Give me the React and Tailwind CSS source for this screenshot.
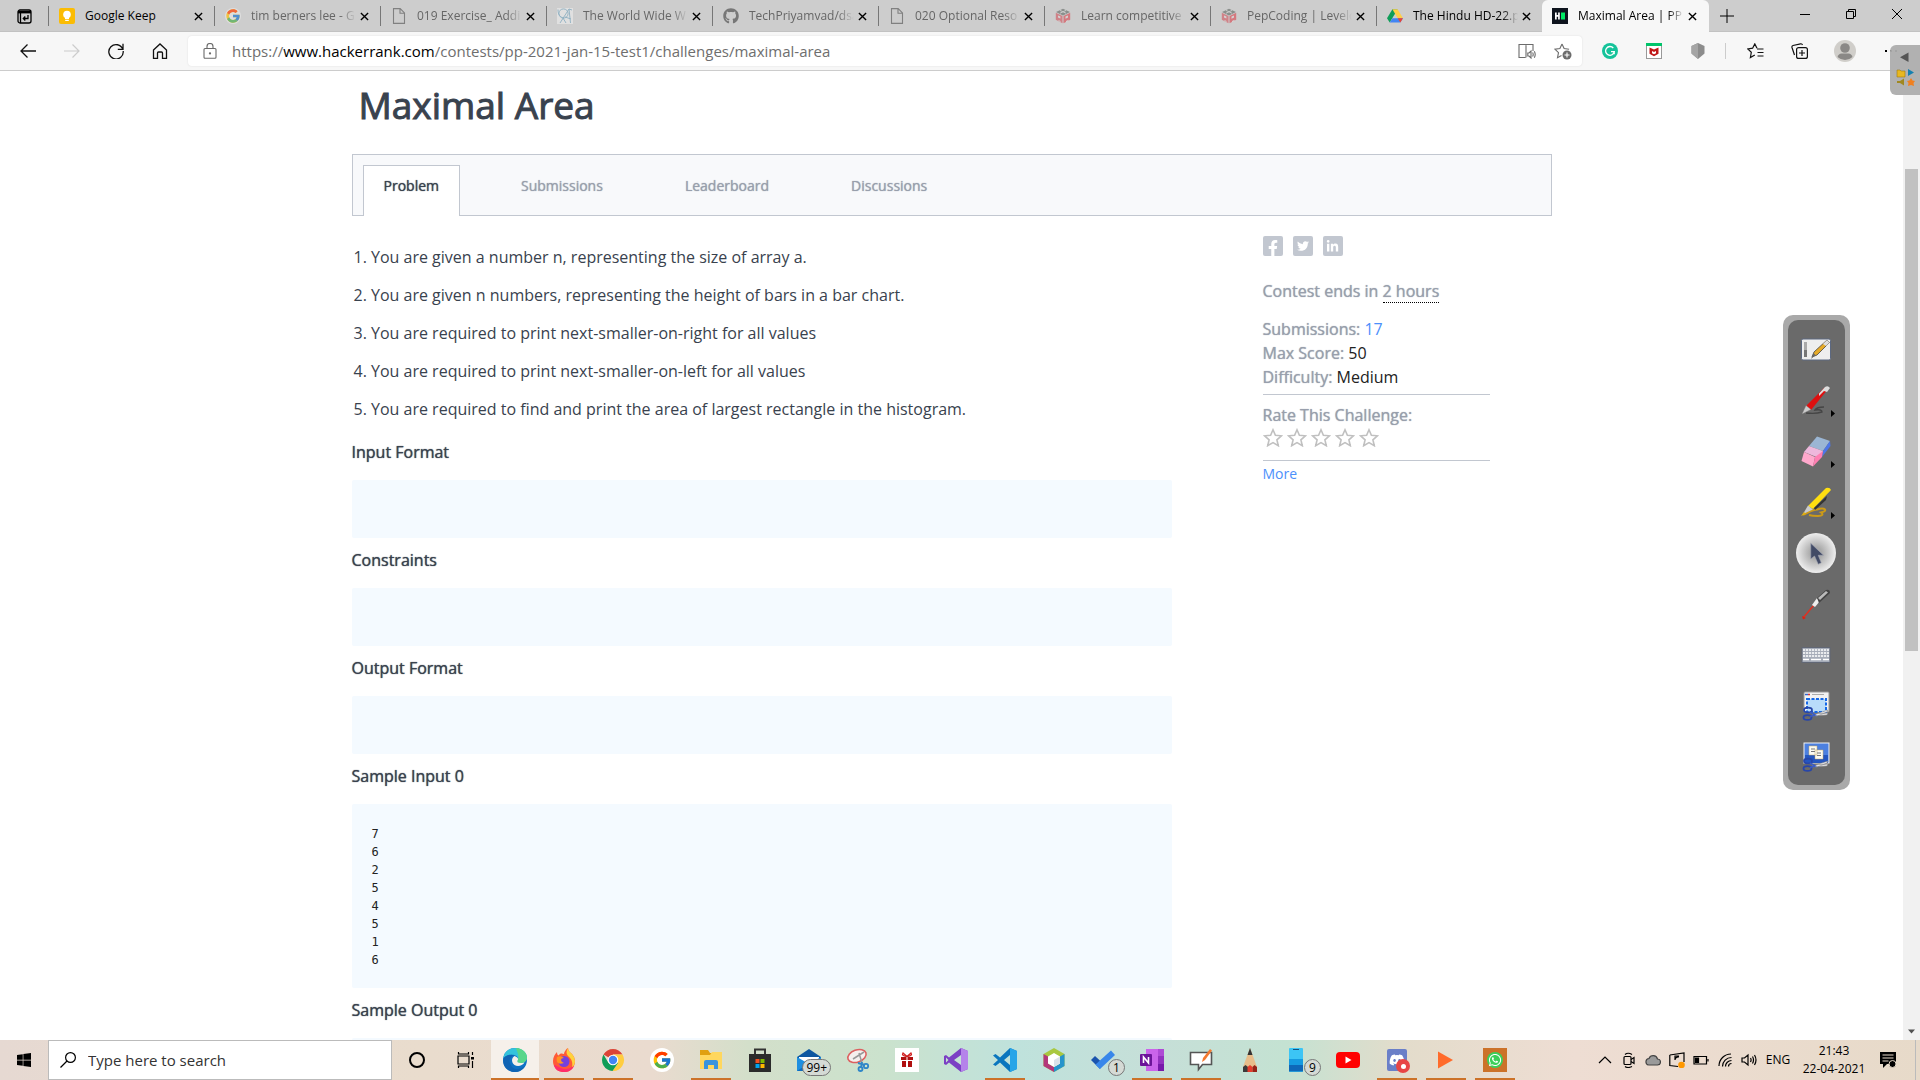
import React from "react";
import { FcGoogle } from "react-icons/fc";
import { FaGithub, FaFacebookF, FaTwitter, FaLinkedinIn, FaWindows, FaWhatsapp, FaDiscord } from "react-icons/fa";

/* ---------- browser tab icons ---------- */
const KeepIcon = () => (
  <svg viewBox="0 0 16 16" className="size-4">
    <rect width="16" height="16" rx="2" fill="#fbbc04" />
    <circle cx="8" cy="6.6" r="3.8" fill="#fff" />
    <path d="M6 9h4v2H6zM6.2 11.8h3.6V13H6.2z" fill="#fff" />
  </svg>
);
const FileIcon = () => (
  <svg viewBox="0 0 16 16" className="size-4" fill="none" stroke="#808080" strokeWidth="1.1">
    <path d="M2.5.6h6.7l4.3 4.3v10.5h-11zM9 .8v4.4h4.3" />
  </svg>
);
const W3Icon = () => (
  <svg viewBox="0 0 16 16" className="size-4" fill="none" stroke="#8fb0c2" strokeWidth=".9">
    <rect width="16" height="16" fill="#e0e0e0" stroke="none" />
    <circle cx="6.500" cy="5.500" r="4.600" />
    <path d="M1 1.500c0 5 2 8 6 8.500M3 15 12 1l1.500 14M8 9l6 2M12 1l3 1M6 10l3 5" />
  </svg>
);
const PepIcon = () => (
  <svg viewBox="0 0 16 16" className="size-4">
    <path d="M8 .8 15 4 8 7.4 1 4z" fill="#8a8f8c" />
    <path d="m.8 4.8 6.7 3.3v7.1L.8 11.8z" fill="#cf8288" />
    <path d="m15.2 4.8-6.7 3.3v7.1l6.7-3.4z" fill="#d4797f" />
    <path d="m3 7.4 2.4 1.2v2L3 9.6zM10.500 8.600 13 7.400v2.200l-2.500 1.200zM3.500 12l2 1v1l-2-1M11 13l2.500-1.200v1.400L11 14.400" fill="#d3d3d3" />
    <path d="M5 2.400 11 5.200M11 2.400 5 5.200" stroke="#c9c9c9" />
  </svg>
);
const DriveIcon = () => (
  <svg viewBox="0 0 16 16" className="size-4">
    <path d="M5.400 1.200h5.200L8 5.700 2.700 14.600 0 10.200z" fill="#0f9d58" />
    <path d="M5.400 1.200h5.200L16 10.200h-5.300z" fill="#ffcf48" />
    <path d="M5.400 10.200H16l-2.700 4.400H2.700z" fill="#4285f4" />
    <path d="M10.700 10.200H16l-2.700 4.400z" fill="#ea4335" />
  </svg>
);
const HackerIcon = () => (
  <svg viewBox="0 0 16 16" className="size-4">
    <rect width="16" height="16" fill="#0e141e" />
    <path d="M3 4.500h1.700v2.600h1.400V4.500h1.700v7H6.100V8.800H4.700v2.700H3z" fill="#fff" />
    <rect x="9" y="4.500" width="4" height="7" fill="#00ea64" />
  </svg>
);

const TABS = [
  { title: "Google Keep", icon: <KeepIcon />, tone: "text-black" },
  { title: "tim berners lee - G", icon: <FcGoogle className="size-4 rounded-full bg-[#e6e6e6] opacity-70" />, tone: "text-[#666]", fade: true },
  { title: "019 Exercise_ Addi", icon: <FileIcon />, tone: "text-[#666]", fade: true },
  { title: "The World Wide W", icon: <W3Icon />, tone: "text-[#666]", fade: true },
  { title: "TechPriyamvad/dsa", icon: <FaGithub className="size-4 text-[#777]" />, tone: "text-[#666]", fade: true },
  { title: "020 Optional Reso", icon: <FileIcon />, tone: "text-[#666]", fade: true },
  { title: "Learn competitive", icon: <PepIcon />, tone: "text-[#666]", fade: true },
  { title: "PepCoding | Levelc", icon: <PepIcon />, tone: "text-[#666]", fade: true },
  { title: "The Hindu HD-22.p", icon: <DriveIcon />, tone: "text-black", fade: true },
  { title: "Maximal Area | PP", icon: <HackerIcon />, tone: "text-black", active: true, fade: true },
];

function CloseX() {
  return (
    <svg viewBox="0 0 10 10" className="size-[9px]" stroke="#000" strokeWidth="1.500">
      <path d="m1 1 8 8M9 1 1 9" />
    </svg>
  );
}

function TabStrip() {
  return (
    <div className="flex h-8 shrink-0 items-stretch bg-[#cdcdcd] shadow-[inset_0_-1px_0_#c2c2c2]">
      <button aria-label="Tab actions" className="flex w-12 shrink-0 items-center pl-[17px]">
        <svg viewBox="0 0 15 15" className="size-[15px]" fill="none" stroke="#000" strokeWidth="1.300">
          <rect x="1" y="1" width="13" height="13" rx="2" />
          <path d="M1 3.200h13" strokeWidth="2.400" />
          <path d="M3.500 3v11" />
          <path d="M11 6v3.500H6.500M8.300 7.500l-2 2 2 2" />
        </svg>
      </button>
      {TABS.map((t, i) => (
        <div
          key={i}
          className={
            t.active
              ? "flex w-[167px] shrink items-center rounded-t-md bg-[#f7f7f7] pr-3 pl-[10px]"
              : "flex w-[166px] shrink items-center pr-[11px]"
          }
        >
          {!t.active && <span className="mr-[10px] h-5 w-px shrink-0 bg-[#777]" />}
          <span className="shrink-0">{t.icon}</span>
          <a
            href="#tab"
            className={`ml-[10px] min-w-0 flex-1 text-[12px] leading-5 whitespace-nowrap ${t.tone} ${t.fade ? "[mask-image:linear-gradient(to_right,black_85%,transparent)]" : ""}`}
          >
            {t.title}
          </a>
          <button aria-label={`Close ${t.title}`} className="ml-1 shrink-0"><CloseX /></button>
        </div>
      ))}
      <button aria-label="New tab" className="flex w-9 shrink-0 items-center justify-center">
        <svg viewBox="0 0 14 14" className="size-[14px]" stroke="#000" strokeWidth="1"><path d="M7 0v14M0 7h14" /></svg>
      </button>
      <div className="ml-auto flex shrink-0 pb-1">
        <button aria-label="Minimize" className="flex w-[46px] items-center justify-center">
          <svg viewBox="0 0 10 10" className="size-[10px]" stroke="#000"><path d="M0 5.500h10" /></svg>
        </button>
        <button aria-label="Restore" className="flex w-[46px] items-center justify-center">
          <svg viewBox="0 0 10 10" className="size-[10px]" fill="none" stroke="#000"><path d="M.5 2.500h7v7h-7zM2.500 2.500v-2h7v7h-2" /></svg>
        </button>
        <button aria-label="Close window" className="flex w-[46px] items-center justify-center">
          <svg viewBox="0 0 10 10" className="size-[10px]" stroke="#000"><path d="m0 0 10 10M10 0 0 10" /></svg>
        </button>
      </div>
    </div>
  );
}

function NavButton({ label, children }) {
  return <button aria-label={label} className="flex h-8 w-11 shrink-0 items-center justify-center">{children}</button>;
}

function Toolbar() {
  return (
    <div className="flex h-[39px] shrink-0 items-center border-b border-[#ccc] bg-[#f7f7f7] pl-[6px]">
      <NavButton label="Back">
        <svg viewBox="0 0 16 16" className="size-4" fill="none" stroke="#111" strokeWidth="1.300"><path d="M16 8H1M7.500 1.500 1 8l6.500 6.500" /></svg>
      </NavButton>
      <NavButton label="Forward">
        <svg viewBox="0 0 16 16" className="size-4" fill="none" stroke="#ccc" strokeWidth="1.200"><path d="M0 8h15M8.500 1.500 15 8l-6.500 6.500" /></svg>
      </NavButton>
      <NavButton label="Reload">
        <svg viewBox="0 0 16 16" className="size-4" fill="none" stroke="#111" strokeWidth="1.300"><path d="M14.800 6.300A7.200 7.200 0 1 0 15.200 8M15 .8v5.500H9.800" /></svg>
      </NavButton>
      <NavButton label="Home">
        <svg viewBox="0 0 16 16" className="size-4" fill="none" stroke="#111" strokeWidth="1.300"><path d="M1.500 7 8 1l6.500 6v8.300h-4V10q0-1-1-1h-3q-1 0-1 1v5.300h-4z" /></svg>
      </NavButton>
      <div className="ml-[6px] flex h-[30px] min-w-0 flex-1 items-center rounded-sm bg-white pr-[10px] pl-[15px] shadow-[0_0_2px_#ddd]">
        <svg viewBox="0 0 14 16" className="h-4 w-[14px] shrink-0" fill="none" stroke="#6b6b6b" strokeWidth="1.100">
          <rect x="1" y="5.500" width="12" height="9.800" rx="1" /><path d="M4 5.500V3.500a3 3 0 0 1 6 0v2" /><circle cx="7" cy="10.400" r=".6" fill="#6b6b6b" />
        </svg>
        <a href="#address" className="ml-[15px] min-w-0 flex-1 truncate text-[15px] leading-6 text-[#6e6e6e]">
          https://<span className="text-black">www.hackerrank.com</span>/contests/pp-2021-jan-15-test1/challenges/maximal-area
        </a>
        <button aria-label="Immersive reader" className="shrink-0">
          <svg viewBox="0 0 18 16" className="h-4 w-[18px]" fill="none" stroke="#6b6b6b" strokeWidth="1.100">
            <path d="M8 2v12.500M7.500 14.500H1v-13h6.500L8 2l.5-.5H15v6.500M9.800 10h1.200L13 8v7l-2-2H9.800zM14.600 9.500q1.200 2 0 4M16.300 8.200q1.800 3.300 0 6.600" />
          </svg>
        </button>
        <button aria-label="Add to favorites" className="ml-[18px] shrink-0">
          <svg viewBox="0 0 18 17" className="h-[17px] w-[18px]" fill="none" stroke="#6b6b6b" strokeWidth="1.100">
            <path d="m8 1 2.100 4.600 5 .6M8 1 5.900 5.600l-5 .6 3.600 3.500-1 5 4-2.200" /><circle cx="13" cy="12" r="4.500" fill="#6b6b6b" stroke="none" /><path d="M13 9.500v5M10.500 12h5" stroke="#fff" />
          </svg>
        </button>
      </div>
      <div className="flex shrink-0 items-center pl-[6px]">
        <NavButton label="Grammarly">
          <svg viewBox="0 0 16 16" className="size-4"><circle cx="8" cy="8" r="8" fill="#15c39a" /><path d="M11.300 5A4.400 4.400 0 1 0 12.300 8.700H9M12.200 8.700v2.600" fill="none" stroke="#fff" strokeWidth="1.300" /></svg>
        </NavButton>
        <NavButton label="McAfee">
          <svg viewBox="0 0 16 16" className="size-4"><rect x=".5" y=".5" width="15" height="15" fill="#fff" stroke="#999" /><path d="M0 0h16v3H0z" fill="#00c46a" /><path d="m3.500 4.500 4.500 2 4.500-2v6.200L8 13.200l-4.500-2.500zM6 8v2.200l2 1 2-1V8L8 9z" fill="#c01818" fillRule="evenodd" /></svg>
        </NavButton>
        <NavButton label="Shield">
          <svg viewBox="0 0 14 16" className="h-4 w-[14px]"><path d="m7 0 6.500 3v7.500L7 16 .5 10.500V3z" fill="#8c8c8c" /><path d="M7 0v16L.5 10.500V3z" fill="#a5a5a5" /></svg>
        </NavButton>
        <span className="mr-[7px] ml-[5px] h-4 w-px bg-[#ccc]" />
        <NavButton label="Favorites">
          <svg viewBox="0 0 17 16" className="h-4 w-[17px]" fill="none" stroke="#111" strokeWidth="1.200"><path d="M10 5.200 7.800.9 5.600 5.200l-4.800.7 3.500 3.400-.9 5.200 4.400-2.500M10 6h6.500M10.500 9.500h6M10.500 13h6" /></svg>
        </NavButton>
        <NavButton label="Collections">
          <svg viewBox="0 0 17 16" className="h-4 w-[17px]" fill="none" stroke="#111" strokeWidth="1.200"><rect x="5.600" y="4.600" width="10.800" height="10.800" rx="2" /><path d="M11 7v6M8 10h6M3.500 12 1 4.500Q.6 3 2 2.500L9.500.8q1.500-.3 2 1.200" /></svg>
        </NavButton>
        <button aria-label="Profile" className="flex w-12 items-center justify-center">
          <svg viewBox="0 0 22 22" className="size-[22px]"><circle cx="11" cy="11" r="11" fill="#d0ceca" /><circle cx="11" cy="8" r="4.800" fill="#8a8886" /><path d="M3.500 17q1-3.500 4-3.500h7q3 0 4 3.500a11 11 0 0 1-15 0" fill="#8a8886" /></svg>
        </button>
        <button aria-label="Settings" className="flex w-[51px] items-center gap-[3px] pl-[16px]">
          <span className="size-[2px] bg-black" /><span className="size-[2px] bg-black" /><span className="size-[2px] bg-black" />
        </button>
      </div>
    </div>
  );
}

/* ---------- challenge page ---------- */
const STATEMENT = [
  "1. You are given a number n, representing the size of array a.",
  "2. You are given n numbers, representing the height of bars in a bar chart.",
  "3. You are required to print next-smaller-on-right for all values",
  "4. You are required to print next-smaller-on-left for all values",
  "5. You are required to find and print the area of largest rectangle in the histogram.",
];

const Section = ({ title, children }) => (
  <section className="mb-[10px]">
    <h2 className="mb-4 text-[16px] leading-6 text-[#39424e] [text-shadow:0_0_1px_currentColor]">{title}</h2>
    <pre className="min-h-[58px] rounded-xs bg-[#f4faff] px-5 pt-[21px] pb-[19px] font-['DejaVu_Sans_Mono',monospace] text-[12px] leading-[18px] text-[#222]">{children}</pre>
  </section>
);

const Social = ({ label, children }) => (
  <a href="#share" aria-label={label} className="flex size-5 items-center justify-center rounded-xs bg-[#c2c7d0] text-white">{children}</a>
);

const Star = ({ n }) => (
  <button aria-label={`Rate ${n}`}>
    <svg viewBox="0 0 20 19" className="h-[19px] w-5" fill="none" stroke="#c0c0c0" strokeWidth="1.600">
      <path d="m10 1.800 2.400 5.400 6 .6-4.500 4 1.400 5.900L10 14.600l-5.300 3.100 1.400-5.900-4.500-4 6-.6z" />
    </svg>
  </button>
);

const Label = ({ children }) => <span className="text-[#989fac] [text-shadow:0_0_1px_currentColor]">{children}</span>;

function Challenge() {
  return (
    <main className="mx-auto w-full max-w-[1200px]">
      <h1 className="mt-[10px] mb-[25px] pl-[7px] text-[37px] leading-[48px] font-normal text-[#39424e] [-webkit-text-stroke:1px_#39424e]">Maximal Area</h1>
      <nav className="flex h-[62px] gap-10 border border-[#c2c7d0] bg-[#f8f9fb] pt-[10px] pl-[10px] text-[14px] leading-10 text-[#989fac] [text-shadow:0_0_1px_currentColor]">
        <a href="#problem" className="-mb-px border border-b-0 border-[#c2c7d0] bg-white px-5 text-[#39424e] [text-shadow:0_0_1px_currentColor]">Problem</a>
        <a href="#submissions" className="border border-transparent px-5">Submissions</a>
        <a href="#leaderboard" className="border border-transparent px-5">Leaderboard</a>
        <a href="#discussions" className="border border-transparent px-5">Discussions</a>
      </nav>
      <div className="flex items-start justify-between">
        <div className="w-[820px] min-w-0 pt-[29px]">
          <div className="mb-[19px] flex flex-col gap-[14px] pl-[2px] text-[16px] leading-6 text-[#39424e]">
            {STATEMENT.map((s) => <p key={s}>{s}</p>)}
          </div>
          <Section title="Input Format" />
          <Section title="Constraints" />
          <Section title="Output Format" />
          <Section title="Sample Input 0">{"7\n6\n2\n5\n4\n5\n1\n6"}</Section>
          <Section title="Sample Output 0" />
        </div>
        <aside className="mr-[62px] w-[227px] shrink-0 pt-5 text-[16px] leading-6 text-[#222]">
          <div className="mb-[23px] flex gap-[10px]">
            <Social label="Facebook"><FaFacebookF className="mt-[3px] size-4" /></Social>
            <Social label="Twitter"><FaTwitter className="size-3" /></Social>
            <Social label="LinkedIn"><FaLinkedinIn className="size-[13px]" /></Social>
          </div>
          <p className="mb-[14px]"><Label>Contest ends in <span className="border-b border-dotted border-black">2 hours</span></Label></p>
          <div className="border-b border-[#c2c7d0] pb-[5px]">
            <p><Label>Submissions:</Label> <a href="#all" className="text-[#4c8ffb]">17</a></p>
            <p><Label>Max Score:</Label> 50</p>
            <p><Label>Difficulty:</Label> Medium</p>
          </div>
          <div className="border-b border-[#c2c7d0] pt-2 pb-[13px]">
            <p className="mb-px"><Label>Rate This Challenge:</Label></p>
            <div className="flex gap-1">{[1, 2, 3, 4, 5].map((n) => <Star key={n} n={n} />)}</div>
          </div>
          <a href="#more" className="text-[14px] text-[#4c8ffb]">More</a>
        </aside>
      </div>
    </main>
  );
}

function Scrollbar() {
  return (
    <div aria-hidden="true" className="flex w-[17px] shrink-0 flex-col bg-[#f1f1f1]">
      <div className="h-[98px]" />
      <div className="mx-[2px] h-[482px] bg-[#c1c1c1]" />
      <svg viewBox="0 0 17 17" className="mt-auto size-[17px]"><path d="M5 6.500h7L8.500 10.500z" fill="#505050" /></svg>
    </div>
  );
}

/* ---------- annotation palette ---------- */
const Scissors = () => (
  <g>
    <path d="m12 25 16-5-1 2-12 5zM12 24l16-1-1 2-13 1z" fill="#e8e8ec" stroke="#777" strokeWidth=".5" />
    <path d="m12 25 14 4-12-2z" fill="#666c76" />
    <ellipse cx="8" cy="20" rx="4" ry="2.400" fill="none" stroke="#2846a8" strokeWidth="1.800" />
    <ellipse cx="7.500" cy="27.500" rx="4" ry="2.400" fill="none" stroke="#2846a8" strokeWidth="1.800" />
    <path d="m10 22 5 3-5 1.500" fill="none" stroke="#3b5cc4" strokeWidth="1.800" />
  </g>
);
const PALETTE = [
  ["Board", <g><rect x="1.500" y="6" width="29" height="21" rx="1.500" fill="#eee" stroke="#5c6880" /><path d="M4 9h3v15H4z" fill="#aaa" /><path d="M4 17h3v7H4z" fill="#777" /><path d="m12 24 2-5L27 7l2.500 2.500L17 22z" fill="#e6aa28" stroke="#444" strokeWidth=".8" /><path d="m23 11 4-4 2.500 2.500L26 13z" fill="#ddd" /><path d="m11 26 2.500-6 2 2z" fill="#666" /></g>],
  ["Pen", <g><path d="M6 29q10 1 16-1 0-3-7-2 2-3 9-3" fill="none" stroke="#454545" strokeWidth="1.400" /><path d="m6 22 18-18q4-2 4 1L11 26z" fill="#dd1010" /><path d="M19 9.500 25 3q3-2 5 1l-3 4-3-1-5 5z" fill="#ddd" /><path d="m2 30 4-8.500 5 4z" fill="#ccc" stroke="#777" strokeWidth=".4" /></g>, true],
  ["Eraser", <g><path d="M17 1.500 30 6 23 16 9 11z" fill="#9bb6d4" /><path d="m30 6 .5 5L22 22l1-6z" fill="#4d76e8" /><path d="m9 11 14 5-4 7L4 17z" fill="#eeb8dc" /><path d="m4 17 11 5-2 9.500L1.500 26z" fill="#ffa8cc" /><path d="m15 22 8-6-1 6-9 9.500z" fill="#ff7fb2" /></g>, true],
  ["Highlighter", <g><path d="M3 29q9-5 14-5.500 6-2 8 0 1 2-4 3 4 3-3 3.500-6 0-9-1" fill="none" stroke="#cc9a18" strokeWidth="2" /><path d="M8 20 26 2q4-1 5 2L13 23z" fill="#ffdf10" /><path d="m14 22 13-12-1 4-11 10z" fill="#333" /><path d="m3 28 5-8.500 5 4z" fill="#ccc" /><path d="m1 30 3-4 2 2z" fill="#e0b010" /></g>, true],
  ["Select", <g><path d="M9 3v21l5-4 5 11 4-2-4-10h7z" fill="#424b66" stroke="#a4a8b5" strokeWidth=".8" /></g>, false, true],
  ["Laser pointer", <g><path d="M3 30 14 17" stroke="#e03020" strokeWidth="1.500" /><path d="m2 28 4 2-3 1.500z" fill="#e02010" /><path d="m12 17 5-7 3 3-5 6z" fill="#eee" /><path d="m17 10 9-8q4-1 4 3L19 15z" fill="#444" /><path d="m18 10 8-7 2 1.500-8 7.500z" fill="#bbb" /></g>],
  ["Keyboard", <g><rect x="2" y="8.500" width="28" height="15" fill="#a6acb8" stroke="#616775" /><path d="M3 11h26M3 14h26M3 17h26" stroke="#fff" strokeWidth="1.700" strokeDasharray="2.200 .8" /><path d="M3 20.500h6M11 20.500h10M23 20.500h6" stroke="#fff" strokeWidth="1.700" /></g>],
  ["Capture region", <g><rect x="4" y="2" width="25" height="20" rx="1" fill="#f2f2f2" stroke="#999" /><path d="M5 4.500h3" stroke="#36c" strokeWidth="1.500" /><path d="M8 4.500h2" stroke="#d33" strokeWidth="1.500" /><path d="M12 4.500h12" stroke="#aaa" /><rect x="7" y="9" width="19" height="13" fill="#b9dcfa" stroke="#1568e8" strokeWidth="2" strokeDasharray="3 1.500" /><Scissors /></g>],
  ["Capture window", <g><rect x="4" y="2" width="25" height="20" fill="#4c80e0" stroke="#f2f2f2" /><path d="M5 14h23v8H5z" fill="#2456c0" /><path d="M9 5h8v9H9zM15 9h8v9h-8z" fill="#fbfbf4" stroke="#c9a860" strokeWidth=".5" /><path d="M11 8h4M11 10.500h4M17 12h4M17 14.500h4" stroke="#777" /><Scissors /></g>],
];

function Palette() {
  return (
    <div className="absolute top-[315px] right-[70px] rounded-[10px] bg-[#a9a9a9] p-[5px]">
      <div className="flex w-[57px] flex-col items-center rounded-[10px] bg-[#6a6a6a] py-[3px] pr-px">
        {PALETTE.map(([name, art, more, on]) => (
          <button key={name} aria-label={name} className="relative flex h-[51px] w-full items-center justify-center">
            <span className={on ? "flex size-10 items-center justify-center rounded-full bg-[radial-gradient(circle,#aaa_20%,#f4f4f4_75%)]" : "flex"}>
              <svg viewBox="0 0 32 32" className={on ? "size-6" : "size-8"}>{art}</svg>
            </span>
            {more && <svg viewBox="0 0 4 7" className="absolute right-[9px] bottom-2 h-[7px] w-1"><path d="M0 0l4 3.500L0 7z" /></svg>}
          </button>
        ))}
      </div>
    </div>
  );
}

function EdgeWidget() {
  return (
    <button aria-label="Expand library" className="absolute top-[45px] right-0 flex h-[50px] w-[30px] items-center justify-center rounded-l-md bg-[#adadad]/95">
      <svg viewBox="0 0 30 50" className="h-[50px] w-[30px]">
        <path d="M18.500 7.500v9.500L10 12.300z" fill="#555" />
        <path d="M7 25h3l1 1h4v6H7z" fill="#e8b820" stroke="#a07a10" strokeWidth=".6" />
        <path d="m18 24 6 3.500-6 3.500z" fill="#1480b0" />
        <path d="M7 36h3l4-2.500v7L10 38H7z" fill="#a08820" />
        <path d="m21 33 1.500 2.500 2.500.5-1.500 2 .5 3-3-1-3 1 .5-3-1.500-2 2.500-.5z" fill="#f08020" />
      </svg>
    </button>
  );
}

/* ---------- taskbar ---------- */
const T = {
  cortana: <g><circle cx="12" cy="12" r="7" fill="none" stroke="#000" strokeWidth="2" /></g>,
  view: <g fill="none" stroke="#000" strokeWidth="1.200"><path d="M4 8h11v8H4zM4.500 4v2h10V4M4.500 20v-2h10v2M18.500 4v3M18.500 13v7" /><path d="M17 9h3v2.500h-3z" fill="#000" stroke="none" /></g>,
  edge: <g><circle cx="12" cy="12" r="12" fill="#0f72c4" /><path d="M.3 10.500C1 4 6 0 12 0c8 0 12 5.500 12 9.500 0 3.500-3 5.500-6 5.500-3.500 0-4.500-1.500-3.500-2.800 2-3.500-3-6.200-7-5.200-4 .5-6.500 2-7.200 3.500" fill="#35c3dc" /><path d="M13 .1c7 .4 11 5.400 11 9.400 0 3.500-3 5.500-6 5.500-3.500 0-4.500-1.500-3.500-2.800C17 9 14 4 13 .1" fill="#58d68a" /><path d="M9 8q-5 5 0 11 5 5 13-1-4 6-10 6C2 24-2 14 1.500 9.500 4 6 9 6 11 8" fill="#1064b4" /><path d="M11.500 8c3 1 4.500 3 3 4.500-1 1.500 1 3.500 7 2-2 3.500-7 4.500-10 2.500S8 10 11.500 8" fill="#f6f1ea" /></g>,
  firefox: <g><path d="M12 24C5 24 1 19 1 13c0-4 2-7 4-9 0 2 .5 3 1.500 3.500C8 5 10 5 12 6c0-2 2-5 4-6 0 3 2 4 4 6q3 3 3 7c0 6-4 11-11 11" fill="#ff5a36" /><path d="M16 0c0 3 2 4 4 6q3 3 3 7c0 2-1 5-3 7 1-5 0-9-4-12-2-2-2-5 0-8" fill="#ffd23c" /><path d="M2 17c1 5 5 7 10 7s8-2 10-6c-5 3-9 4-13 2-3-1-5-3-7-3" fill="#ff2d6a" /><circle cx="12" cy="13.500" r="5.500" fill="#7540dc" /><path d="M5 9q4-2 7 1-3 0-3 2 0 2 3 3-5 2-7-1-1-3 0-5" fill="#ff9320" /></g>,
  chrome: <g><path d="M12 12 2.500 6.500A11 11 0 0 1 21.500 6.500H12z" fill="#db4437" /><path d="M12 12V6.500h9.500A11 11 0 0 1 11.500 23L17 15z" fill="#ffcd40" /><path d="m12 12 5 3-5.500 8A11 11 0 0 1 2.500 6.500L7.500 15z" fill="#0f9d58" /><circle cx="12" cy="12" r="5.300" fill="#fff" /><circle cx="12" cy="12" r="4.200" fill="#4285f4" /></g>,
  explorer: <g><path d="M1 2h8l2 3h12v16H1z" fill="#e0a010" /><path d="M1 7h10l2-3h10v17H1z" fill="#ffd75e" /><path d="M5 21v-7q0-2 2-2h10q2 0 2 2v7h-4v-4H9v4z" fill="#3a94dc" /></g>,
  store: <g><path d="M7 7V1.500h10V7" fill="none" stroke="#333" strokeWidth="2" /><path d="M1 6h22v18H1z" fill="#2b2b2b" /><path d="M7.500 11h4v4h-4z" fill="#f25022" /><path d="M12.500 11h4v4h-4z" fill="#7fba00" /><path d="M7.500 16h4v4h-4z" fill="#00a4ef" /><path d="M12.500 16h4v4h-4z" fill="#ffb900" /></g>,
  mail: <g><path d="M0 9 12 1l12 8v14H0z" fill="#0d57a0" /><path d="M2 9h20v10H2z" fill="#fff" /><path d="m0 9 12 7L24 9v14H0z" fill="#1f8fe0" /><path d="m0 23 12-8 12 8z" fill="#0f6cc0" /></g>,
  snip: <g fill="none"><ellipse cx="11" cy="8" rx="9.500" ry="6" fill="#f5f0ee" stroke="#dc6060" strokeWidth="1.600" transform="rotate(-20 11 8)" /><path d="m7 11 11-7M13 5l3 10" stroke="#999" strokeWidth="1.500" /><path d="m12 15 7 2M16 14l-1 6" stroke="#2f86c8" strokeWidth="2" /><circle cx="20" cy="18" r="2.200" stroke="#2f86c8" strokeWidth="1.800" /><circle cx="14.500" cy="21" r="2" stroke="#2f86c8" strokeWidth="1.800" /></g>,
  gift: <g><path d="M0 0h24v24H0z" fill="#fff" /><path d="M6 9h12v3H6zM7 13h4v6H7zM13 13h4v6h-4z" fill="#b01010" /><path d="M12 8.500 8 5q-2 3 4 3.500M12 8.500 16 5q2 3-4 3.500" fill="none" stroke="#d02020" strokeWidth="1.300" /><path d="M11.500 9h1v10h-1z" fill="#fff" /></g>,
  vs: <g><path d="M17 0l7 3v18l-7 3L5 14.500 2 17 0 16V8l2-1 3 2.500zM17 7l-7 5 7 5zM2 9.500v5L4.500 12z" fill="#7b3fc4" fillRule="evenodd" /><path d="m17 0 7 3v18l-7 3z" fill="#b583ea" /></g>,
  code: <g><path d="m17 0 7 3v18l-7 3L7 14.500 2.500 18 0 16.500 5 12 0 7.500 2.500 6 7 9.500zM17 7l-6 5 6 5z" fill="#0a76be" fillRule="evenodd" /><path d="m17 0 7 3v18l-7 3z" fill="#28a5e8" /></g>,
  netbeans: <g><path d="M12 0 22.500 6v12L12 24 1.500 18V6z" fill="#a9c840" /><path d="M1.500 6 6 8.500v7l6 3.500v5L1.500 18z" fill="#b3387a" /><path d="M22.500 6 18 8.500v7L12 19v5l10.500-6z" fill="#2694cc" /><path d="m12 5 6 3.500v7L12 19l-6-3.500v-7z" fill="#fff" /><path d="M12 12v7l6-3.500v-7z" fill="#dbe3ea" /></g>,
  todo: <g><path d="m0 12 4-4 6.500 6L9 21z" fill="#1b54ad" /><path d="M4.500 16.500 20 2.500 24 7 9 21z" fill="#3887ea" /></g>,
  onenote: <g><path d="M6 1h18v22H6z" fill="#ca64ea" /><path d="M18 1h6v7h-6z" fill="#ae4bd5" /><path d="M18 8h6v8h-6z" fill="#9332bf" /><path d="M18 16h6v7h-6z" fill="#7719aa" /><rect y="6" width="12" height="12" rx="1" fill="#6c1599" /><path d="M3.500 15V9l5 6V9" fill="none" stroke="#fff" strokeWidth="1.600" /></g>,
  board: <g><path d="M1.500 4.500h21v12h-9l-4 5v-5h-8z" fill="#fff" stroke="#555" strokeWidth="1.600" /><path d="m13 14 1-4 7-9 2 1.500-7 9.500z" fill="#f47a30" /></g>,
  pencil: <g><path d="m12 0 7 19v5H5v-5z" fill="#e8bd8a" /><path d="m12 0 2.500 7h-5z" fill="#333" /><path d="m5 19 2.500-2 2.500 2v5H5z" fill="#3a3a3a" /><path d="m9.500 19 2.500-2 2.500 2v5h-5z" fill="#e43b2c" /><path d="m14.500 19 2-2 2.500 2v5h-4.500z" fill="#962318" /></g>,
  phone: <g><rect x="2" width="14" height="24" rx="1" fill="#3cc5f5" /><path d="M2 11h14v6H2z" fill="#159be0" /><path d="M2 17h14v6.500H2z" fill="#0e68b8" /><path d="M6 1.500h6" stroke="#145080" /></g>,
  youtube: <g><rect y="4" width="24" height="16" rx="4" fill="#f00" /><path d="M9.500 8.500v7l6-3.500z" fill="#fff" /></g>,
  play: <g><path d="M4 3.500v17L19 12z" fill="#ff6b2b" /></g>,
};
const Ico = ({ n }) => <svg viewBox="0 0 24 24" className="size-6">{T[n]}</svg>;

const APPS = [
  { name: "Cortana", icon: <Ico n="cortana" /> },
  { name: "Task View", icon: <Ico n="view" /> },
  { name: "Edge", icon: <Ico n="edge" />, state: "active" },
  { name: "Firefox", icon: <Ico n="firefox" />, state: "open" },
  { name: "Chrome", icon: <Ico n="chrome" />, state: "open" },
  { name: "Google", icon: <FcGoogle className="size-6 rounded-full bg-white p-[2px]" /> },
  { name: "File Explorer", icon: <Ico n="explorer" />, state: "open" },
  { name: "Store", icon: <Ico n="store" /> },
  { name: "Mail", icon: <Ico n="mail" />, badge: "99+" },
  { name: "Snipping Tool", icon: <Ico n="snip" /> },
  { name: "Gift", icon: <Ico n="gift" /> },
  { name: "Visual Studio", icon: <Ico n="vs" /> },
  { name: "VS Code", icon: <Ico n="code" />, state: "open" },
  { name: "NetBeans", icon: <Ico n="netbeans" /> },
  { name: "To Do", icon: <Ico n="todo" />, badge: "1" },
  { name: "OneNote", icon: <Ico n="onenote" />, state: "open" },
  { name: "Whiteboard", icon: <Ico n="board" />, state: "open" },
  { name: "Pencil", icon: <Ico n="pencil" /> },
  { name: "Your Phone", icon: <Ico n="phone" />, badge: "9" },
  { name: "YouTube", icon: <Ico n="youtube" /> },
  { name: "Discord", icon: <span className="relative flex h-[22px] w-5 items-center justify-center rounded-xs bg-[#6a7fc8]"><FaDiscord className="size-4 text-white" /><span className="absolute -right-[3px] -bottom-[2px] flex size-[14px] items-center justify-center rounded-full bg-[#e84545]"><span className="size-[5px] rounded-full bg-white" /></span></span>, state: "open" },
  { name: "Player", icon: <Ico n="play" />, state: "open" },
  { name: "WhatsApp", icon: <span className="flex size-6 items-center justify-center bg-[#cc7229]"><span className="flex size-4 items-center justify-center rounded-full bg-[#3ccf5a]"><FaWhatsapp className="size-[14px] text-white" /></span></span>, state: "open" },
];

const Tray = ({ label, children }) => (
  <button aria-label={label} className="flex w-6 items-center justify-center">
    <svg viewBox="0 0 16 16" className="size-4" fill="none" stroke="#000" strokeWidth="1.200">{children}</svg>
  </button>
);

function Taskbar() {
  return (
    <footer className="flex h-10 shrink-0 items-stretch bg-[linear-gradient(to_right,#e6d9d2_0%,#e9dccd_22%,#eadbcf_34%,#d3dfca_39%,#cbe2cd_46%,#bfe2dc_53%,#c6dfd8_60%,#c4e2d2_67%,#e3dccb_73%,#eeddd3_82%,#e7dac9_100%)] text-black">
      <button aria-label="Start" className="flex w-12 shrink-0 items-center justify-center"><FaWindows className="size-4" /></button>
      <label className="flex w-[344px] shrink items-center border border-[#bbb] bg-white pl-[11px]">
        <svg viewBox="0 0 16 16" className="size-4 shrink-0" fill="none" stroke="#000" strokeWidth="1.200"><circle cx="10.500" cy="5.500" r="4.900" /><path d="m7 9-6.500 6.500" /></svg>
        <input aria-label="Search" placeholder="Type here to search" className="ml-3 min-w-0 flex-1 text-[15px] text-black outline-none placeholder:text-[#333]" />
      </label>
      <div className="ml-px flex shrink-0 gap-px">
        {APPS.map((a) => (
          <button key={a.name} aria-label={a.name} className={a.state === "active" ? "relative flex w-12 items-center justify-center border-b-2 border-[#cc7229] bg-[#f6f0ea] pt-[2px]" : "relative flex w-12 items-center justify-center"}>
            {a.icon}
            {a.state === "open" && <span className="absolute inset-x-1 bottom-0 h-[2px] bg-[#cc7229]" />}
            {a.badge && <span className="absolute right-[2px] bottom-1 min-w-[17px] rounded-full border border-[#777] bg-[#d5dad5] px-[3px] text-center text-[12px] leading-[15px]">{a.badge}</span>}
          </button>
        ))}
      </div>
      <div className="ml-auto flex shrink-0 items-stretch">
        <Tray label="Show hidden icons"><path d="m2 11 6-6 6 6" /></Tray>
        <Tray label="Meet now"><rect x="3" y="4.500" width="7" height="8" rx="1" /><path d="m10 7.500 3-2v6l-3-2M4 2.500q3-2.500 7 0M4 14.500q3 2 7 0" /></Tray>
        <Tray label="OneDrive"><path d="M3.500 13h9a3 3 0 0 0 0-6A4.500 4.500 0 0 0 4 6.500a3.300 3.300 0 0 0-.5 6.500" fill="#9a9a9a" stroke="#444" /></Tray>
        <Tray label="Update"><path d="M.8 3 15 1v9M.8 3v10.500L9 14.500M10 4H6v4M6 7.500q1-3 4-2.500" /><circle cx="12.500" cy="13" r="3.300" fill="#ff9800" stroke="none" /></Tray>
        <Tray label="Battery"><path d="M1 4.500h12.500v7.500H1zM15 7v2.500" /><path d="M2.500 6h3v4.500h-3z" fill="#000" /></Tray>
        <Tray label="Network"><path d="M2 14A12 12 0 0 1 14 2M5.500 14.500A9 9 0 0 1 14.500 5.500M8.500 14.500a6 6 0 0 1 6-6M11.500 14.500a3 3 0 0 1 3-3" /></Tray>
        <Tray label="Volume"><path d="M1 6h2.500L7 3v10l-3.500-3H1zM9.500 6q1.200 2 0 4M11.500 4.500q2 3.500 0 7M13.500 3q3 5 0 10" /></Tray>
        <button className="w-[34px] text-[12px]">ENG</button>
        <button className="w-[78px] text-center text-[12px] leading-[18px]"><span className="block">21:43</span><span className="block">22-04-2021</span></button>
        <button aria-label="Notifications" className="flex w-[42px] items-center justify-center pr-3">
          <svg viewBox="0 0 18 16" className="h-4 w-[18px]"><path d="M1 0h16v12H8l-4 4v-4H1z" /><path d="M3.500 3h11M3.500 6h11M3.500 9h6" stroke="#e7dac9" strokeWidth="1.200" /><circle cx="13.500" cy="12" r="3.500" stroke="#e7dac9" /></svg>
        </button>
        <span className="mr-1 w-px bg-[#bbb]" />
      </div>
    </footer>
  );
}

export default function App() {
  return (
    <div className="relative flex h-screen flex-col overflow-hidden bg-white font-['Open_Sans',sans-serif]">
      <TabStrip />
      <Toolbar />
      <div className="flex min-h-0 flex-1">
        <div className="min-w-0 flex-1 overflow-hidden"><Challenge /></div>
        <Scrollbar />
      </div>
      <Taskbar />
      <Palette />
      <EdgeWidget />
    </div>
  );
}
